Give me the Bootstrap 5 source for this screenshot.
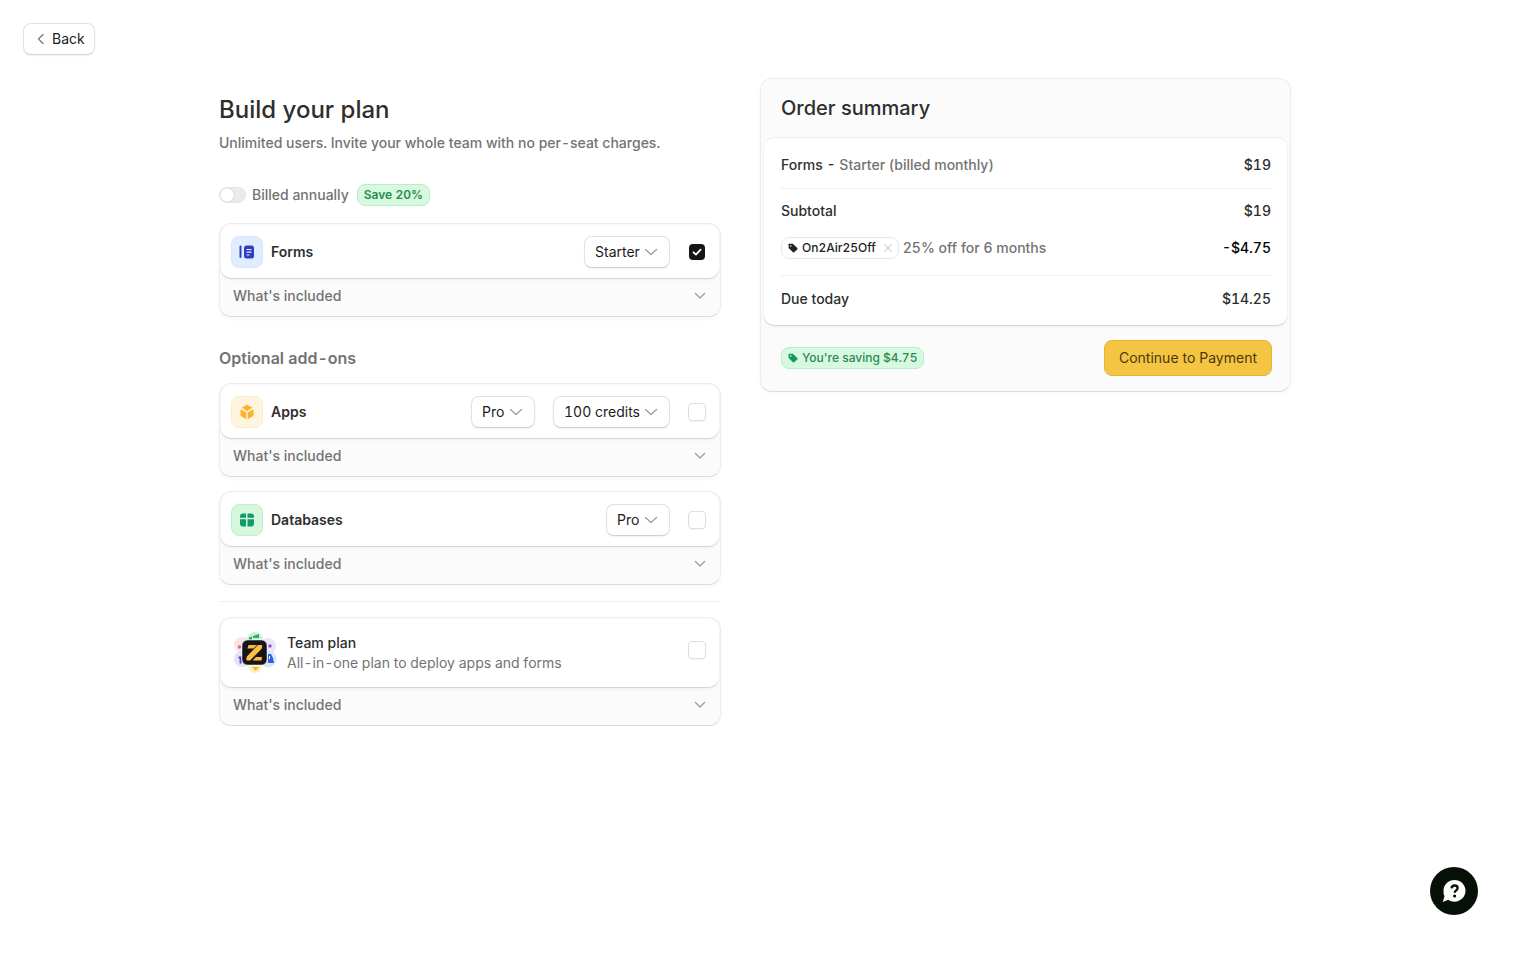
<!DOCTYPE html>
<html lang="en">
<head>
<meta charset="utf-8">
<meta name="viewport" content="width=device-width, initial-scale=1">
<title>Build your plan</title>
<link href="https://cdn.jsdelivr.net/npm/bootstrap@5.3.0/dist/css/bootstrap.min.css" rel="stylesheet">
<style>
  :root { --ink: #2e2e2e; --muted: #737373; --line: #ededed; --panel: #fbfbfb; }
  body { font-family: Inter, "Liberation Sans", sans-serif; font-size: 14px; line-height: 20px; font-weight: 500; color: var(--ink); background: #fff; font-variant-numeric: tabular-nums; padding-right: 15px; }
  .soft { color: var(--muted); }
  .topbar { padding: 23px 23px 0; }
  .ctl { height: 32px; border: 1px solid #e2e2e2; border-bottom-color: #d2d2d2; border-radius: 8px; background-color: #fff; color: #1c1c1c; font-size: 14px; line-height: 20px; font-weight: 400; font-variant-numeric: tabular-nums; box-shadow: 0 1px 2px rgba(0,0,0,.06); }
  .back { width: 72px; }
  .layout { display: grid; grid-template-columns: 502fr 531fr; column-gap: 39px; max-width: 1072px; margin: 23px auto 0; align-items: start; }
  .plan { padding-top: 17px; }
  h1 { font-size: 24px; line-height: 30px; font-weight: 550; margin: 0 0 8px; }
  h2 { font-size: 20px; line-height: 28px; font-weight: 550; margin: 0; }
  h3 { font-size: 16px; line-height: 24px; font-weight: 600; margin: 29px 0 13px; color: var(--muted); }
  .billing { margin: 31px 0 17px; height: 22px; }
  .toggle { appearance: none; width: 27px; height: 16px; border-radius: 8px; margin: 0 6px 0 0; background: radial-gradient(circle at 7px 7px, #fff 6px, #dcdcdc 7px, #ebebeb 8px); border: 1px solid #e4e4e4; }
  .tag-green { height: 22px; padding: 0 6px; border: 1px solid #b9eec9; border-radius: 8px; background: #d6f9df; color: #2a8a55; font-size: 12px; line-height: 20px; font-weight: 600; }
  .tag-saving { font-weight: 500; }
  .panel { border: 1px solid var(--line); border-bottom-color: #dcdcdc; border-radius: 12px; background: var(--panel); padding: 1px; box-shadow: 0 2px 4px rgba(0,0,0,.03); }
  .panel-next { margin-top: 14px; }
  .panel-face { background: #fff; border-radius: 10px; box-shadow: 0 1px 1px rgba(0,0,0,.14), 0 2px 4px rgba(0,0,0,.04); }
  .product { height: 53px; padding: 0 13px 0 10px; }
  .name { font-weight: 600; margin-left: 8px; }
  .tile { width: 32px; height: 32px; border-radius: 8px; border: 1px solid; }
  .tile-blue { background: #e0edff; border-color: #d5e6fd; }
  .tile-amber { background: #fff4de; border-color: #feebca; }
  .tile-green { background: #d5f7dd; border-color: #bff0cb; }
  .pick { appearance: none; padding: 0 29px 0 10px; margin-right: 18px; background: #fff url("data:image/svg+xml,%3Csvg xmlns='http://www.w3.org/2000/svg' width='14' height='8' fill='none' stroke='%239a9a9a' stroke-width='1.2' stroke-linecap='round' stroke-linejoin='round'%3E%3Cpath d='M1.5 1.5 7 6.5 12.500 1.5'/%3E%3C/svg%3E") no-repeat right 11px center; }
  .tick { appearance: none; width: 18px; height: 18px; border: 1px solid #dedede; border-radius: 4px; background: #fff; margin: 0; box-shadow: 0 1px 1px rgba(0,0,0,.04); }
  .tick:checked { width: 16px; height: 16px; margin: 0 1px; border: 0; background: #161616 url("data:image/svg+xml,%3Csvg xmlns='http://www.w3.org/2000/svg' width='16' height='16' fill='none' stroke='white' stroke-width='1.8' stroke-linecap='round' stroke-linejoin='round'%3E%3Cpath d='m4.500 8.300 2.400 2.300 4.700-5'/%3E%3C/svg%3E"); }
  .included { width: 100%; height: 37px; border: 0; background: none; color: var(--muted); font-weight: 500; padding: 0 13px 2px 12px; }
  .rule { height: 1px; border: 0; margin: 16px 0 15px; background: #efefef; opacity: 1; }
  .team { height: 68px; padding: 0 13px 0 12px; }
  .team .tick { align-self: flex-start; margin-top: 22px; }
  .team-text { margin-left: 10px; }
  .summary { padding: 1px 3px; }
  .summary-head { padding: 14px 17px 15px; }
  .summary .panel-face { padding: 7px 16px 6px 17px; border-top: 1px solid var(--line); }
  .line { height: 40px; }
  .line-subtotal { height: 38px; }
  .line-coupon { height: 36px; margin-bottom: 9px; }
  .line-sep { border: 0; height: 1px; margin: 3px 0; background: #f1f1f1; opacity: 1; }
  .coupon { height: 22px; border: 1px solid #e6e6e6; border-radius: 8px; padding: 0 6px; font-size: 12px; line-height: 20px; color: #222; margin-right: 4px; }
  .plain { border: 0; background: none; padding: 0; line-height: 1; }
  .summary-foot { padding: 15px 15px 14px 17px; }
  .pay { height: 36px; padding: 0 14px; border: 1px solid #e3b436; border-radius: 8px; background: #f4c443; color: #4d3710; font-size: 14px; font-weight: 400; }
  .help { position: fixed; right: 47px; bottom: 48px; width: 48px; height: 48px; border-radius: 50%; border: 0; padding: 0; background: #071007; }
  svg { display: block; flex: none; }
</style>
</head>
<body>
<header class="topbar">
  <button type="button" class="ctl back d-flex align-items-center p-0 ps-2">
    <svg width="20" height="14" fill="none" stroke="#777" stroke-width="1.2" stroke-linecap="round" stroke-linejoin="round"><path d="M11 2.500 6.500 7l4.500 4.500"/></svg>Back</button>
</header>
<main class="layout">
  <section class="plan">
    <h1>Build your plan</h1>
    <p class="soft m-0">Unlimited users. Invite your whole team with no per-seat charges.</p>
    <div class="billing d-flex align-items-center">
      <input type="checkbox" role="switch" class="toggle" id="annual"><label for="annual" class="soft me-2">Billed annually</label><span class="tag-green">Save 20%</span>
    </div>

    <article class="panel">
      <div class="panel-face product d-flex align-items-center">
        <span class="tile tile-blue d-flex align-items-center justify-content-center"><svg width="16" height="16" viewBox="0 0 16 16"><path d="M1.500 2.500v10.500" stroke="#363bc4" stroke-width="2" stroke-linecap="round"/><rect x="5" y="1.500" width="10" height="13" rx="2.500" fill="#363bc4"/><path d="M7.500 5.500H12.500M7.500 8.200h5M7.500 11h3" stroke="#e0edff" stroke-width="1.200"/></svg></span>
        <span class="name me-auto">Forms</span>
        <select class="ctl pick" aria-label="Forms plan"><option>Starter</option></select>
        <input type="checkbox" class="tick" aria-label="Add Forms" checked>
      </div>
      <button type="button" class="included d-flex align-items-center justify-content-between">What's included<svg width="12" height="8" fill="none" stroke="#999" stroke-width="1.2" stroke-linecap="round" stroke-linejoin="round"><path d="m1.500 1.500 4.500 4.500 4.500-4.500"/></svg></button>
    </article>

    <h3>Optional add-ons</h3>
    <article class="panel">
      <div class="panel-face product d-flex align-items-center">
        <span class="tile tile-amber d-flex align-items-center justify-content-center"><svg width="16" height="16" viewBox="0 0 16 16" fill="#fbb32f"><path d="m8 .8 5.500 3L8 6.900 2.500 3.800zM1.500 5.300l5.800 3.200v6.700l-4.700-2.600q-1.100-.6-1.100-1.900zM14.500 5.300 8.700 8.500v6.700l4.700-2.600q1.100-.6 1.100-1.900z"/></svg></span>
        <span class="name me-auto">Apps</span>
        <select class="ctl pick" aria-label="Apps plan"><option>Pro</option></select>
        <select class="ctl pick" aria-label="Apps credits"><option>100 credits</option></select>
        <input type="checkbox" class="tick" aria-label="Add Apps">
      </div>
      <button type="button" class="included d-flex align-items-center justify-content-between">What's included<svg width="12" height="8" fill="none" stroke="#999" stroke-width="1.2" stroke-linecap="round" stroke-linejoin="round"><path d="m1.500 1.500 4.500 4.500 4.500-4.500"/></svg></button>
    </article>

    <article class="panel panel-next">
      <div class="panel-face product d-flex align-items-center">
        <span class="tile tile-green d-flex align-items-center justify-content-center"><svg width="16" height="16" viewBox="0 0 16 16" fill="#129b68"><path d="M7 1.500v4.300H1V4.500q0-3 3-3zM8.500 1.500H12q3 0 3 3v1.300H8.500zM1 7.300h6v7.200H4q-3 0-3-3zM8.500 7.300H15v4.200q0 3-3 3H8.500z"/></svg></span>
        <span class="name me-auto">Databases</span>
        <select class="ctl pick" aria-label="Databases plan"><option>Pro</option></select>
        <input type="checkbox" class="tick" aria-label="Add Databases">
      </div>
      <button type="button" class="included d-flex align-items-center justify-content-between">What's included<svg width="12" height="8" fill="none" stroke="#999" stroke-width="1.2" stroke-linecap="round" stroke-linejoin="round"><path d="m1.500 1.500 4.500 4.500 4.500-4.500"/></svg></button>
    </article>

    <hr class="rule">

    <article class="panel">
      <div class="panel-face team d-flex align-items-center">
        <svg width="44" height="44" viewBox="0 0 44 44">
          <circle cx="9" cy="14" r="8" fill="#fbe3ea"/><circle cx="35" cy="15" r="8" fill="#eee2fc"/><circle cx="22" cy="9" r="8" fill="#c5f3d2"/><circle cx="9" cy="28" r="8" fill="#e6e2fb"/><circle cx="35" cy="28" r="8.500" fill="#d8e6ff"/><circle cx="22" cy="35" r="7" fill="#fff0c2"/>
          <path d="M16 6.500l3-1v3h-3zM20 5l6-2v4h-6z" fill="#3ba56b"/><circle cx="6.500" cy="16" r="1.700" fill="#b6758c"/><circle cx="37" cy="15" r="1.700" fill="#8a55c9"/><path d="M5.500 26.500h2v6" fill="none" stroke="#5047c6" stroke-width="1.800"/><path d="M35 23h3l2 4 1 5h-6z" fill="#3463d6"/><path d="M36.500 25v3" stroke="#fff"/><path d="M19 36h7l-3.500 4z" fill="#f0b838"/>
          <rect x="9" y="9" width="25" height="25" rx="5.500" fill="#17151a" stroke="#fff" stroke-width=".5"/>
          <path d="M15.500 14h8.500l-3.500 3.500h-6zM28.500 29.500h-9l3.500-3.500h6z" fill="#f9bd3a"/><path d="M25 14h3.500q1 0 .7 1.500l-.3 1.500q-.2.800-1 1.500L17 29.500h-2.500q-1.500 0-1.200-1.500l.3-1.500q.2-1 1-1.800z" fill="#fcbf3f"/>
        </svg>
        <div class="team-text me-auto"><div>Team plan</div><div class="soft fw-normal">All-in-one plan to deploy apps and forms</div></div>
        <input type="checkbox" class="tick" aria-label="Choose Team plan">
      </div>
      <button type="button" class="included d-flex align-items-center justify-content-between">What's included<svg width="12" height="8" fill="none" stroke="#999" stroke-width="1.2" stroke-linecap="round" stroke-linejoin="round"><path d="m1.500 1.500 4.500 4.500 4.500-4.500"/></svg></button>
    </article>
  </section>

  <aside class="panel summary">
    <div class="summary-head"><h2>Order summary</h2></div>
    <div class="panel-face">
      <div class="line d-flex align-items-center justify-content-between"><span>Forms - <span class="soft">Starter (billed monthly)</span></span><span>$19</span></div>
      <hr class="line-sep">
      <div class="line-subtotal d-flex align-items-center justify-content-between"><span>Subtotal</span><span>$19</span></div>
      <div class="line-coupon d-flex align-items-center">
        <span class="coupon d-flex align-items-center"><svg class="me-1" width="10" height="10" viewBox="0 0 10 10"><path d="M1 0.800h3.800L9.300 5q.5.600 0 1.200L6.200 9.300q-.6.500-1.200 0L.6 5V1.200z" fill="#222"/><circle cx="2.800" cy="3" r=".8" fill="#fff"/></svg>On2Air25Off<button type="button" class="plain ms-2" aria-label="Remove coupon"><svg width="8" height="8" stroke="#bbb"><path d="m.5.500 7 7m0-7-7 7"/></svg></button></span>
        <span class="soft">25% off for 6 months</span><span class="ms-auto text-black">-$4.75</span>
      </div>
      <hr class="line-sep">
      <div class="line d-flex align-items-center justify-content-between"><span>Due today</span><span>$14.25</span></div>
    </div>
    <div class="summary-foot d-flex align-items-center justify-content-between">
      <span class="tag-green tag-saving d-flex align-items-center"><svg class="me-1" width="10" height="10" viewBox="0 0 10 10"><path d="M1 0.800h3.800L9.300 5q.5.600 0 1.200L6.200 9.300q-.6.500-1.200 0L.6 5V1.200z" fill="#129b58"/><circle cx="2.800" cy="3" r=".8" fill="#fff"/></svg>You're saving $4.75</span>
      <button type="button" class="pay">Continue to Payment</button>
    </div>
  </aside>
</main>
<button type="button" class="help" aria-label="Help">
  <svg width="48" height="48" viewBox="0 0 48 48"><path d="M24.500 13c6 0 11 4.700 11 10.800s-5 10.900-11 10.900c-2.400 0-4.600-.7-6.300-1.900L12.800 35l1.700-5.800a10.800 10.800 0 0 1-1-5.400C13.500 17.700 18.500 13 24.500 13z" fill="#fff"/><path d="M21.500 21.300c.2-1.900 1.400-2.800 3.100-2.800 1.800 0 3 1 3 2.600 0 2.300-2.900 2.300-2.900 4.700" fill="none" stroke="#071007" stroke-width="2.300"/><circle cx="24.600" cy="29" r="1.600" fill="#071007"/></svg>
</button>
<script src="https://cdn.jsdelivr.net/npm/bootstrap@5.3.0/dist/js/bootstrap.bundle.min.js"></script>
</body>
</html>
